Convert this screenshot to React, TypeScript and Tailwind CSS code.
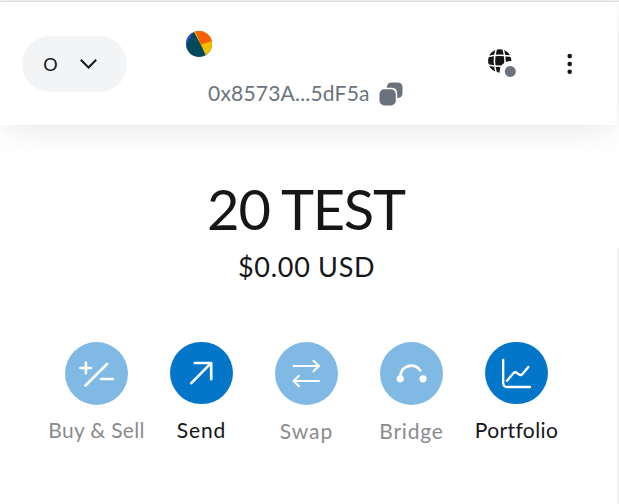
import React from 'react';

interface Action {
  id: string;
  label: string;
  disabled: boolean;
  labelClass: string;
  icon: React.ReactNode;
}

const actions: Action[] = [
  {
    id: 'buy-sell',
    label: 'Buy & Sell',
    disabled: true,
    labelClass: 'mt-[11px] tracking-[0.3px]',
    icon: <path d="M15.5 26H26M20.9 20.5V31.2M42 22L20.5 43.5M36 37H48" />
  },
  {
    id: 'send',
    label: 'Send',
    disabled: false,
    labelClass: 'mt-3 tracking-[0.9px]',
    icon: <path d="M21.3 41.2L41 21.2M24.8 21H41.2V37.3" />
  },
  {
    id: 'swap',
    label: 'Swap',
    disabled: true,
    labelClass: 'mt-3 tracking-[1px]',
    icon: <path strokeWidth={2} d="M18.5 24H44M38.5 18.8L44 24L38.5 29.2M44 39H18.5M24 33.8L18.5 39L24 44.2" />
  },
  {
    id: 'bridge',
    label: 'Bridge',
    disabled: true,
    labelClass: 'mt-3 tracking-[0.8px]',
    icon: (
      <>
        <path d="M20.2 35.5C20.8 22.5 34 20.5 40.3 28.5" />
        <circle cx="20.2" cy="36.8" r="3.6" fill="#fff" stroke="none" />
        <circle cx="43" cy="36.8" r="3.6" fill="#fff" stroke="none" />
      </>
    )
  },
  {
    id: 'portfolio',
    label: 'Portfolio',
    disabled: false,
    labelClass: 'mt-3 tracking-[0.4px]',
    icon: <path strokeWidth={2.3} d="M18.2 18V41Q18.2 45 22.2 45H45M22 38.7L28.4 31.2Q30 29.4 32 31L34.2 32.6Q36 33.7 37.5 31.9L43.3 25" />
  }
];

const ActionButton: React.FC<{ action: Action }> = ({ action }) => (
  <button className="flex w-[105px] flex-col items-center">
    <span
      className={`flex w-[63px] items-center justify-center rounded-full ${
        action.disabled ? 'h-[63px] bg-[#81b9e5]' : 'h-[62px] bg-[#0376c9]'
      }`}
    >
      <svg className="size-[63px] shrink-0" viewBox="0 0 63 63" fill="none" stroke="#fff" strokeWidth={2.6} strokeLinecap="round" strokeLinejoin="round">
        {action.icon}
      </svg>
    </span>
    <span
      className={`whitespace-nowrap text-[21px] leading-[28px] ${action.labelClass} ${
        action.disabled ? 'text-[#8a8b8c]' : 'text-[#141618]'
      }`}
    >
      {action.label}
    </span>
  </button>
);

export default function App() {
  return (
    <div className="flex h-[504px] w-[619px] flex-col overflow-hidden bg-white font-['Lato','Open_Sans',sans-serif] text-[#141618]">
      <div className="flex h-[2px] shrink-0 flex-col">
        <div className="h-px bg-[#f1f1f1]" />
        <div className="h-px bg-[#e0e0e0]" />
      </div>

      {/* Header */}
      <header className="flex h-[123px] w-[617px] shrink-0 shadow-[0_6px_32px_-4px_rgba(0,0,0,0.11)]">
        <button className="ml-[22px] mt-[34px] flex h-14 w-[105px] items-center rounded-full bg-[#f2f4f6] pl-[20px]">
          <span className="w-[17px] text-[18px] leading-none">O</span>
          <svg className="ml-5 h-3 w-[19px]" viewBox="0 0 19 12" fill="none" stroke="#141618" strokeWidth={2}>
            <path d="M1.8 1.8L9.5 9.5L17.2 1.8" />
          </svg>
        </button>

        <div className="ml-[59px] flex w-[220px] flex-col pt-[29px]">
          <svg className="size-[26px]" viewBox="0 0 26 26">
            <defs>
              <clipPath id="avatar">
                <circle cx="13" cy="13" r="13" />
              </clipPath>
            </defs>
            <g clipPath="url(#avatar)">
              <rect width="26" height="26" fill="#03495e" />
              <path d="M7.8 0H0V14Z" fill="#2650de" />
              <path d="M7.5 0L15 14L20.5 26H26V0Z" fill="#f3be00" />
              <path d="M9.2 0L15 13.5L26 10V0Z" fill="#fb5e02" />
            </g>
          </svg>
          <button className="ml-[22px] mt-[22px] flex h-[30px] items-center">
            <span className="-mt-0.5 w-[171px] text-left text-[21px] leading-[30px] tracking-[0.2px] text-[#6a737d]">0x8573A...5dF5a</span>
            <svg className="size-6 shrink-0" viewBox="0 0 24 24" fill="#6a737d">
              <path d="M13 0.5H18.5Q23.5 0.5 23.5 5.5V11Q23.5 16 18.2 16V11.5Q18.2 5.8 12.5 5.8H7.8Q7.8 0.5 13 0.5Z" />
              <rect x="0.5" y="7.3" width="16.3" height="16.2" rx="4.8" />
            </svg>
          </button>
        </div>

        <div className="ml-[82px] mt-[47px] flex items-start">
          <svg className="h-[30px] w-[30px]" viewBox="0 0 30 30">
            <circle cx="11.7" cy="11.8" r="11.6" fill="#141618" />
            <path d="M8.3 0Q4.5 11.8 8.3 24M15.1 0Q18.9 11.8 15.1 24M0 7.5Q11.7 5 24 7.5M0 16Q11.7 18.5 24 16" fill="none" stroke="#fff" strokeWidth="1.5" />
            <circle cx="22" cy="22.5" r="10.4" fill="#fff" />
            <circle cx="22.3" cy="22.4" r="5.5" fill="#6a737d" />
          </svg>
          <svg className="ml-[46px] mt-[3px] h-[24px] w-3" viewBox="0 0 12 24" fill="#141618">
            <circle cx="5.7" cy="4.1" r="2.3" />
            <circle cx="5.7" cy="12" r="2.3" />
            <circle cx="5.7" cy="19.8" r="2.3" />
          </svg>
        </div>
      </header>

      {/* Balance and actions */}
      <div className="flex flex-1">
        <main className="flex w-[617px] flex-col">
          <h1 className="ml-[207px] mt-[49px] flex h-[70px] items-center text-[56px] leading-[70px]">
            <span className="w-[74px] tracking-[-1px]">20</span>
            <span className="tracking-[-1.3px]">TEST</span>
          </h1>
          <p className="ml-[238px] mt-[6px] h-[34px] whitespace-nowrap text-[27px] leading-[34px] tracking-[0.7px]">$0.00 USD</p>
          <div className="ml-11 mt-[58px] flex items-start">
            {actions.map((action) => (
              <ActionButton key={action.id} action={action} />
            ))}
          </div>
        </main>
        <div className="mt-[123px] w-[2px] bg-[#f1f1f1]" />
      </div>
    </div>
  );
}
